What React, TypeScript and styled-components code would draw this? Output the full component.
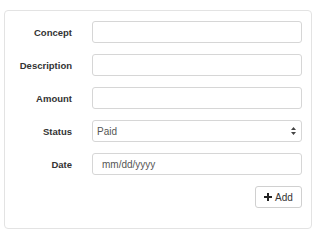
import React, { useState } from 'react';
import styled, { createGlobalStyle } from 'styled-components';

const GlobalStyle = createGlobalStyle`
  html, body {
    margin: 0;
    padding: 0;
    background: #fff;
  }
  body {
    font-family: "Liberation Sans", Arial, sans-serif;
    color: #333;
  }
`;

const Page = styled.div`
  padding: 10px 8px 11px 4px;
`;

const Panel = styled.form`
  border: 1px solid #e3e3e3;
  border-radius: 4px;
  padding: 10px 9px 20px 0;
  display: flex;
  flex-direction: column;
  gap: 11px;
`;

const Row = styled.div`
  display: grid;
  grid-template-columns: 67px 1fr;
  column-gap: 20px;
  align-items: center;
`;

const Label = styled.label`
  text-align: right;
  font-size: 9.5px;
  font-weight: 700;
  color: #333;
`;

const Field = styled.input<{ $indent?: number }>`
  box-sizing: border-box;
  width: 100%;
  height: 22px;
  border: 1px solid #d6d6d6;
  border-radius: 3px;
  padding: 0 5px 0 ${(p) => p.$indent ?? 5}px;
  font-family: inherit;
  font-size: 10px;
  color: #555;
  background: #fff;
  outline: none;

  &::placeholder {
    color: #555;
    opacity: 1;
  }
`;

const SelectWrap = styled.div`
  position: relative;
`;

const Select = styled.select`
  box-sizing: border-box;
  width: 100%;
  height: 22px;
  border: 1px solid #d6d6d6;
  border-radius: 3px;
  padding: 0 5px 0 4px;
  font-family: inherit;
  font-size: 10px;
  color: #555;
  background: #fff;
  appearance: none;
  -webkit-appearance: none;
  outline: none;
`;

const Arrows = styled.svg`
  position: absolute;
  right: 6px;
  top: 7px;
  pointer-events: none;
`;

const Actions = styled.div`
  display: flex;
  justify-content: flex-end;
`;

const AddButton = styled.button`
  box-sizing: border-box;
  height: 22px;
  width: 47px;
  border: 1px solid #d0d0d0;
  border-radius: 3px;
  background: #fff;
  display: flex;
  align-items: center;
  justify-content: center;
  gap: 3px;
  padding: 0;
  font-family: inherit;
  font-size: 10px;
  color: #333;
  cursor: pointer;
`;

const App: React.FC = () => {
  const [concept, setConcept] = useState('');
  const [description, setDescription] = useState('');
  const [amount, setAmount] = useState('');
  const [status, setStatus] = useState('paid');
  const [date, setDate] = useState('');

  return (
    <Page>
      <GlobalStyle />
      <Panel onSubmit={(e) => e.preventDefault()}>
        <Row>
          <Label htmlFor="concept">Concept</Label>
          <Field id="concept" value={concept} onChange={(e) => setConcept(e.target.value)} />
        </Row>
        <Row>
          <Label htmlFor="description">Description</Label>
          <Field id="description" value={description} onChange={(e) => setDescription(e.target.value)} />
        </Row>
        <Row>
          <Label htmlFor="amount">Amount</Label>
          <Field id="amount" value={amount} onChange={(e) => setAmount(e.target.value)} />
        </Row>
        <Row>
          <Label htmlFor="status">Status</Label>
          <SelectWrap>
            <Select id="status" value={status} onChange={(e) => setStatus(e.target.value)}>
              <option value="paid">Paid</option>
              <option value="pending">Pending</option>
            </Select>
            <Arrows width="5" height="8" viewBox="0 0 5 8">
              <path d="M2.5 0 L5 3 H0 Z M2.5 8 L5 5 H0 Z" fill="#444" />
            </Arrows>
          </SelectWrap>
        </Row>
        <Row>
          <Label htmlFor="date">Date</Label>
          <Field
            id="date"
            $indent={9}
            placeholder="mm/dd/yyyy"
            value={date}
            onChange={(e) => setDate(e.target.value)}
          />
        </Row>
        <Actions>
          <AddButton type="submit">
            <svg width="8" height="8" viewBox="0 0 8 8">
              <path d="M3 0 H5 V3 H8 V5 H5 V8 H3 V5 H0 V3 H3 Z" fill="#222" />
            </svg>
            Add
          </AddButton>
        </Actions>
      </Panel>
    </Page>
  );
};

export default App;
